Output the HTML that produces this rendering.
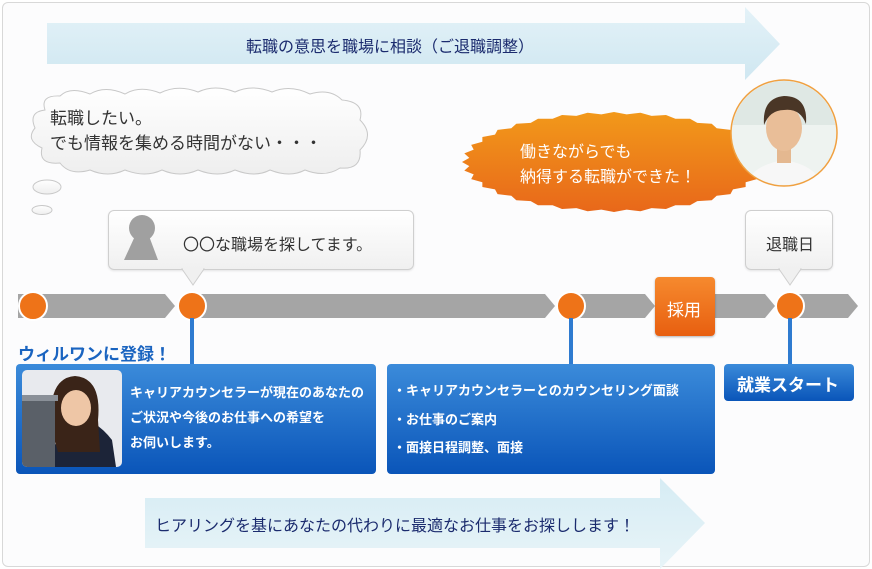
<!DOCTYPE html>
<html><head><meta charset="utf-8"><style>
*{margin:0;padding:0;box-sizing:border-box}
body{width:872px;height:569px;background:#fff;position:relative;overflow:hidden;font-family:"Liberation Sans","Noto Sans CJK JP",sans-serif}
.a{position:absolute}
.frame{left:2px;top:2px;width:868px;height:565px;border:1px solid #d8d8d8;border-radius:6px;background:#fcfcfd}
.t{position:absolute;white-space:nowrap}
.bb{background:linear-gradient(#3b8bda,#0a55b9);border-radius:4px;color:#fff;font-weight:bold}
.vl{position:absolute;width:4px;background:#2f7bd0}
.sp{position:absolute;border:1px solid #cfcfcf;border-radius:6px;background:linear-gradient(#fff,#f0f0f0);box-shadow:0 1px 2px rgba(0,0,0,.1)}
</style></head><body>
<div class="a frame"></div>
<svg class="a" style="left:0;top:0" width="872" height="569">
<defs>
<linearGradient id="ar" x1="0" y1="0" x2="0" y2="1"><stop offset="0" stop-color="#e4f2f8"/><stop offset="1" stop-color="#cfe7f1"/></linearGradient>
<linearGradient id="ar2" x1="0" y1="0" x2="0" y2="1"><stop offset="0" stop-color="#d6ecf4"/><stop offset="1" stop-color="#e8f4f8"/></linearGradient>
<linearGradient id="og" x1="0" y1="0" x2="0" y2="1"><stop offset="0" stop-color="#f29a1a"/><stop offset="1" stop-color="#e8661a"/></linearGradient>
<linearGradient id="cl" x1="0" y1="0" x2="0" y2="1"><stop offset="0" stop-color="#fff"/><stop offset="1" stop-color="#eeeeee"/></linearGradient>
<polygon id="hex" points="1,0 .5,.866 -.5,.866 -1,0 -.5,-.866 .5,-.866"/>
<clipPath id="burst">
<use href="#hex" transform="translate(614,162) scale(152,50)"/>
<use href="#hex" transform="translate(614,162) scale(152,50) rotate(10)"/>
<use href="#hex" transform="translate(614,162) scale(152,50) rotate(20)"/>
<use href="#hex" transform="translate(614,162) scale(152,50) rotate(30)"/>
<use href="#hex" transform="translate(614,162) scale(152,50) rotate(40)"/>
<use href="#hex" transform="translate(614,162) scale(152,50) rotate(50)"/>
</clipPath>
<clipPath id="mc"><circle cx="784" cy="133" r="52"/></clipPath>
</defs>
<polygon points="47,23 745,23 745,7 780,44 745,80 745,64 47,64" fill="url(#ar)"/>
<polygon points="145,498 660,498 660,478 705,523 660,569 660,548 145,548" fill="url(#ar2)"/>
<g fill="url(#cl)" stroke="#c8c8c8" stroke-width="1">
<path d="M45,110 Q40,95 60,96 Q70,86 90,94 Q105,85 125,94 Q140,85 160,93 Q178,84 198,92 Q215,84 235,92 Q252,84 272,92 Q290,84 310,94 Q330,88 342,100 Q365,102 360,120 Q375,135 360,150 Q362,170 340,168 Q325,178 305,170 Q290,178 270,170 Q255,178 235,170 Q218,178 198,170 Q180,178 162,170 Q145,178 125,170 Q108,178 90,170 Q70,176 60,163 Q38,165 42,148 Q25,140 35,128 Q28,112 45,110Z"/>
<ellipse cx="47" cy="187" rx="14" ry="7"/>
<ellipse cx="42" cy="210" rx="10" ry="4.5"/>
</g>
<rect x="460" y="110" width="310" height="105" fill="url(#og)" clip-path="url(#burst)"/>
<circle cx="784" cy="133" r="53" fill="#eef3f0" stroke="#f0a040" stroke-width="1.5"/>
<g clip-path="url(#mc)">
<rect x="730" y="80" width="110" height="45" fill="#dfe8e4"/>
<path d="M745,186 Q752,165 784,160 Q816,165 823,186Z" fill="#f7f7f7"/>
<rect x="777" y="145" width="14" height="18" fill="#e4b890"/>
<ellipse cx="784" cy="128" rx="18" ry="23" fill="#e9be98"/>
<path d="M764,125 Q762,98 784,96 Q808,96 806,124 Q800,108 784,110 Q770,110 764,125Z" fill="#4a3626"/>
</g>
<g fill="#a5a5a5">
<polygon points="18,294 165,294 175,306 165,318 18,318"/>
<polygon points="185,294 545,294 555,306 545,318 185,318"/>
<polygon points="565,294 645,294 655,306 645,318 565,318"/>
<polygon points="712,294 765,294 775,306 765,318 712,318"/>
<polygon points="785,294 848,294 858,306 848,318 785,318"/>
</g>
<g fill="#ee7318" stroke="#fff" stroke-width="2">
<circle cx="33" cy="306" r="14"/><circle cx="192" cy="306" r="14"/><circle cx="571" cy="306" r="14"/><circle cx="790" cy="306" r="14"/>
</g>
</svg>
<div class="sp" style="left:108px;top:210px;width:306px;height:60px"></div>
<svg class="a" style="left:180px;top:268px" width="26" height="18"><polygon points="2,1 24,1 13,17" fill="#f0f0f0" stroke="#cfcfcf"/><rect x="3" y="0" width="20" height="2" fill="#f0f0f0"/></svg>
<div class="sp" style="left:745px;top:210px;width:88px;height:60px"></div>
<svg class="a" style="left:777px;top:268px" width="26" height="18"><polygon points="2,1 24,1 13,17" fill="#f0f0f0" stroke="#cfcfcf"/><rect x="3" y="0" width="20" height="2" fill="#f0f0f0"/></svg>
<svg class="a" style="left:120px;top:212px" width="45" height="55"><circle cx="22" cy="16" r="13" fill="#a0a0a0"/><polygon points="15,24 29,24 38,48 4,48" fill="#a0a0a0"/></svg>
<div class="t" style="left:183px;top:231px;font-size:16px;color:#333">〇〇な職場を探してます。</div>
<div class="t" style="left:766px;top:231px;font-size:16px;color:#333">退職日</div>

<div class="t" style="left:246px;top:33px;font-size:16px;color:#1b2b6e">転職の意思を職場に相談（ご退職調整）</div>
<div class="t" style="left:50px;top:106px;font-size:17px;color:#333;line-height:25px">転職したい。<br>でも情報を集める時間がない・・・</div>
<div class="t" style="left:520px;top:140px;font-size:16px;color:#fff;line-height:25px">働きながらでも<br>納得する転職ができた！</div>

<div class="a" style="left:655px;top:277px;width:60px;height:59px;border-radius:4px;background:linear-gradient(#f68a2e,#e85f10);box-shadow:0 1px 2px rgba(0,0,0,.3)"></div>
<div class="t" style="left:667px;top:296px;font-size:17px;color:#fff">採用</div>

<div class="vl" style="left:190px;top:318px;height:48px"></div>
<div class="vl" style="left:569px;top:318px;height:48px"></div>
<div class="vl" style="left:788px;top:318px;height:48px"></div>

<div class="t" style="left:18px;top:340px;font-size:17px;font-weight:bold;color:#1a64c0">ウィルワンに登録！</div>
<div class="a bb" style="left:16px;top:364px;width:360px;height:110px"></div>
<div class="t" style="left:130px;top:380px;font-size:13px;font-weight:bold;color:#fff;line-height:25px">キャリアカウンセラーが現在のあなたの<br>ご状況や今後のお仕事への希望を<br>お伺いします。</div>
<div class="a bb" style="left:387px;top:364px;width:328px;height:110px"></div>
<div class="t" style="left:393px;top:377px;font-size:13px;font-weight:bold;color:#fff;line-height:28.5px">・キャリアカウンセラーとのカウンセリング面談<br>・お仕事のご案内<br>・面接日程調整、面接</div>
<div class="a bb" style="left:724px;top:364px;width:130px;height:37px"></div>
<div class="t" style="left:737px;top:371px;font-size:17px;font-weight:bold;color:#fff">就業スタート</div>

<div class="t" style="left:155px;top:512px;font-size:16px;color:#1b2b6e">ヒアリングを基にあなたの代わりに最適なお仕事をお探しします！</div>

<svg class="a" style="left:20px;top:368px" width="104" height="101" viewBox="20 368 104 101">
<defs><clipPath id="wc3"><rect x="22" y="370" width="100" height="97" rx="5"/></clipPath></defs>
<g clip-path="url(#wc3)">
<rect x="22" y="370" width="100" height="97" fill="#e8eaee"/>
<path d="M50,467 Q58,420 75,418 Q95,418 112,440 L116,467Z" fill="#1c2438"/>
<path d="M52,432 Q46,378 75,376 Q102,378 98,420 L100,452 L58,452Z" fill="#3a2418"/>
<ellipse cx="76" cy="408" rx="15" ry="18" fill="#eec6a6"/>
<rect x="22" y="400" width="33" height="67" fill="#5a6068"/>
<rect x="22" y="395" width="36" height="6" fill="#8a9098"/>
</g></svg>
</body></html>
